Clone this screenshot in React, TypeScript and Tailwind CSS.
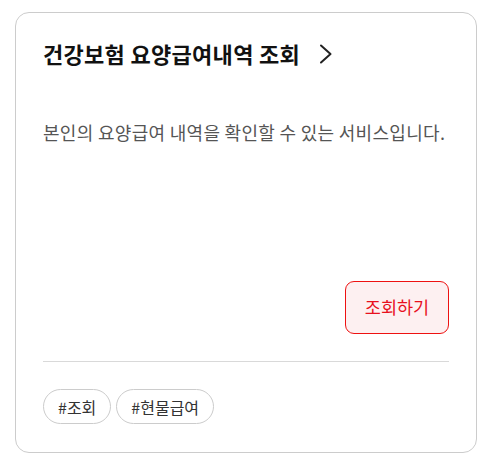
export default function App() {
  return (
    <div className="min-h-[467px] w-[490px] bg-white pt-3 pl-[15px] font-['Noto_Sans_CJK_KR','Noto_Sans',sans-serif]">
      <div className="flex h-[441px] w-[462px] flex-col rounded-[14px] border border-[#cccccc] px-[27px] pt-[24px] pb-[28px]">
        <a className="flex items-center gap-[19px] text-[22px] leading-[32px] font-bold tracking-[0.3px] text-[#111111]">
          건강보험 요양급여내역 조회
          <svg width="13" height="20" viewBox="0 0 13 20" fill="none" className="mt-[1px]">
            <path d="M2 1.5l9.5 8.5-9.5 8.5" stroke="#222222" strokeWidth="2" strokeLinecap="round" strokeLinejoin="round" />
          </svg>
        </a>
        <p className="mt-[50px] text-[18px] leading-[26px] tracking-[0.3px] text-[#555555]">
          본인의 요양급여 내역을 확인할 수 있는 서비스입니다.
        </p>
        <div className="mt-auto flex justify-end">
          <button
            type="button"
            className="h-[53px] w-[104px] rounded-[9px] border border-[#ee1111] bg-[#fdf0f1] text-[17.5px] text-[#e8101e]"
          >
            조회하기
          </button>
        </div>
        <div className="mt-[27px] h-px bg-[#d9d9d9]" />
        <div className="mt-[27px] flex gap-[5px]">
          <span className="flex h-[35px] items-center rounded-full border border-[#cccccc] px-[14px] text-[16px] text-[#333333]">
            #조회
          </span>
          <span className="flex h-[35px] items-center rounded-full border border-[#cccccc] px-[14px] text-[16px] text-[#333333]">
            #현물급여
          </span>
        </div>
      </div>
    </div>
  );
}
